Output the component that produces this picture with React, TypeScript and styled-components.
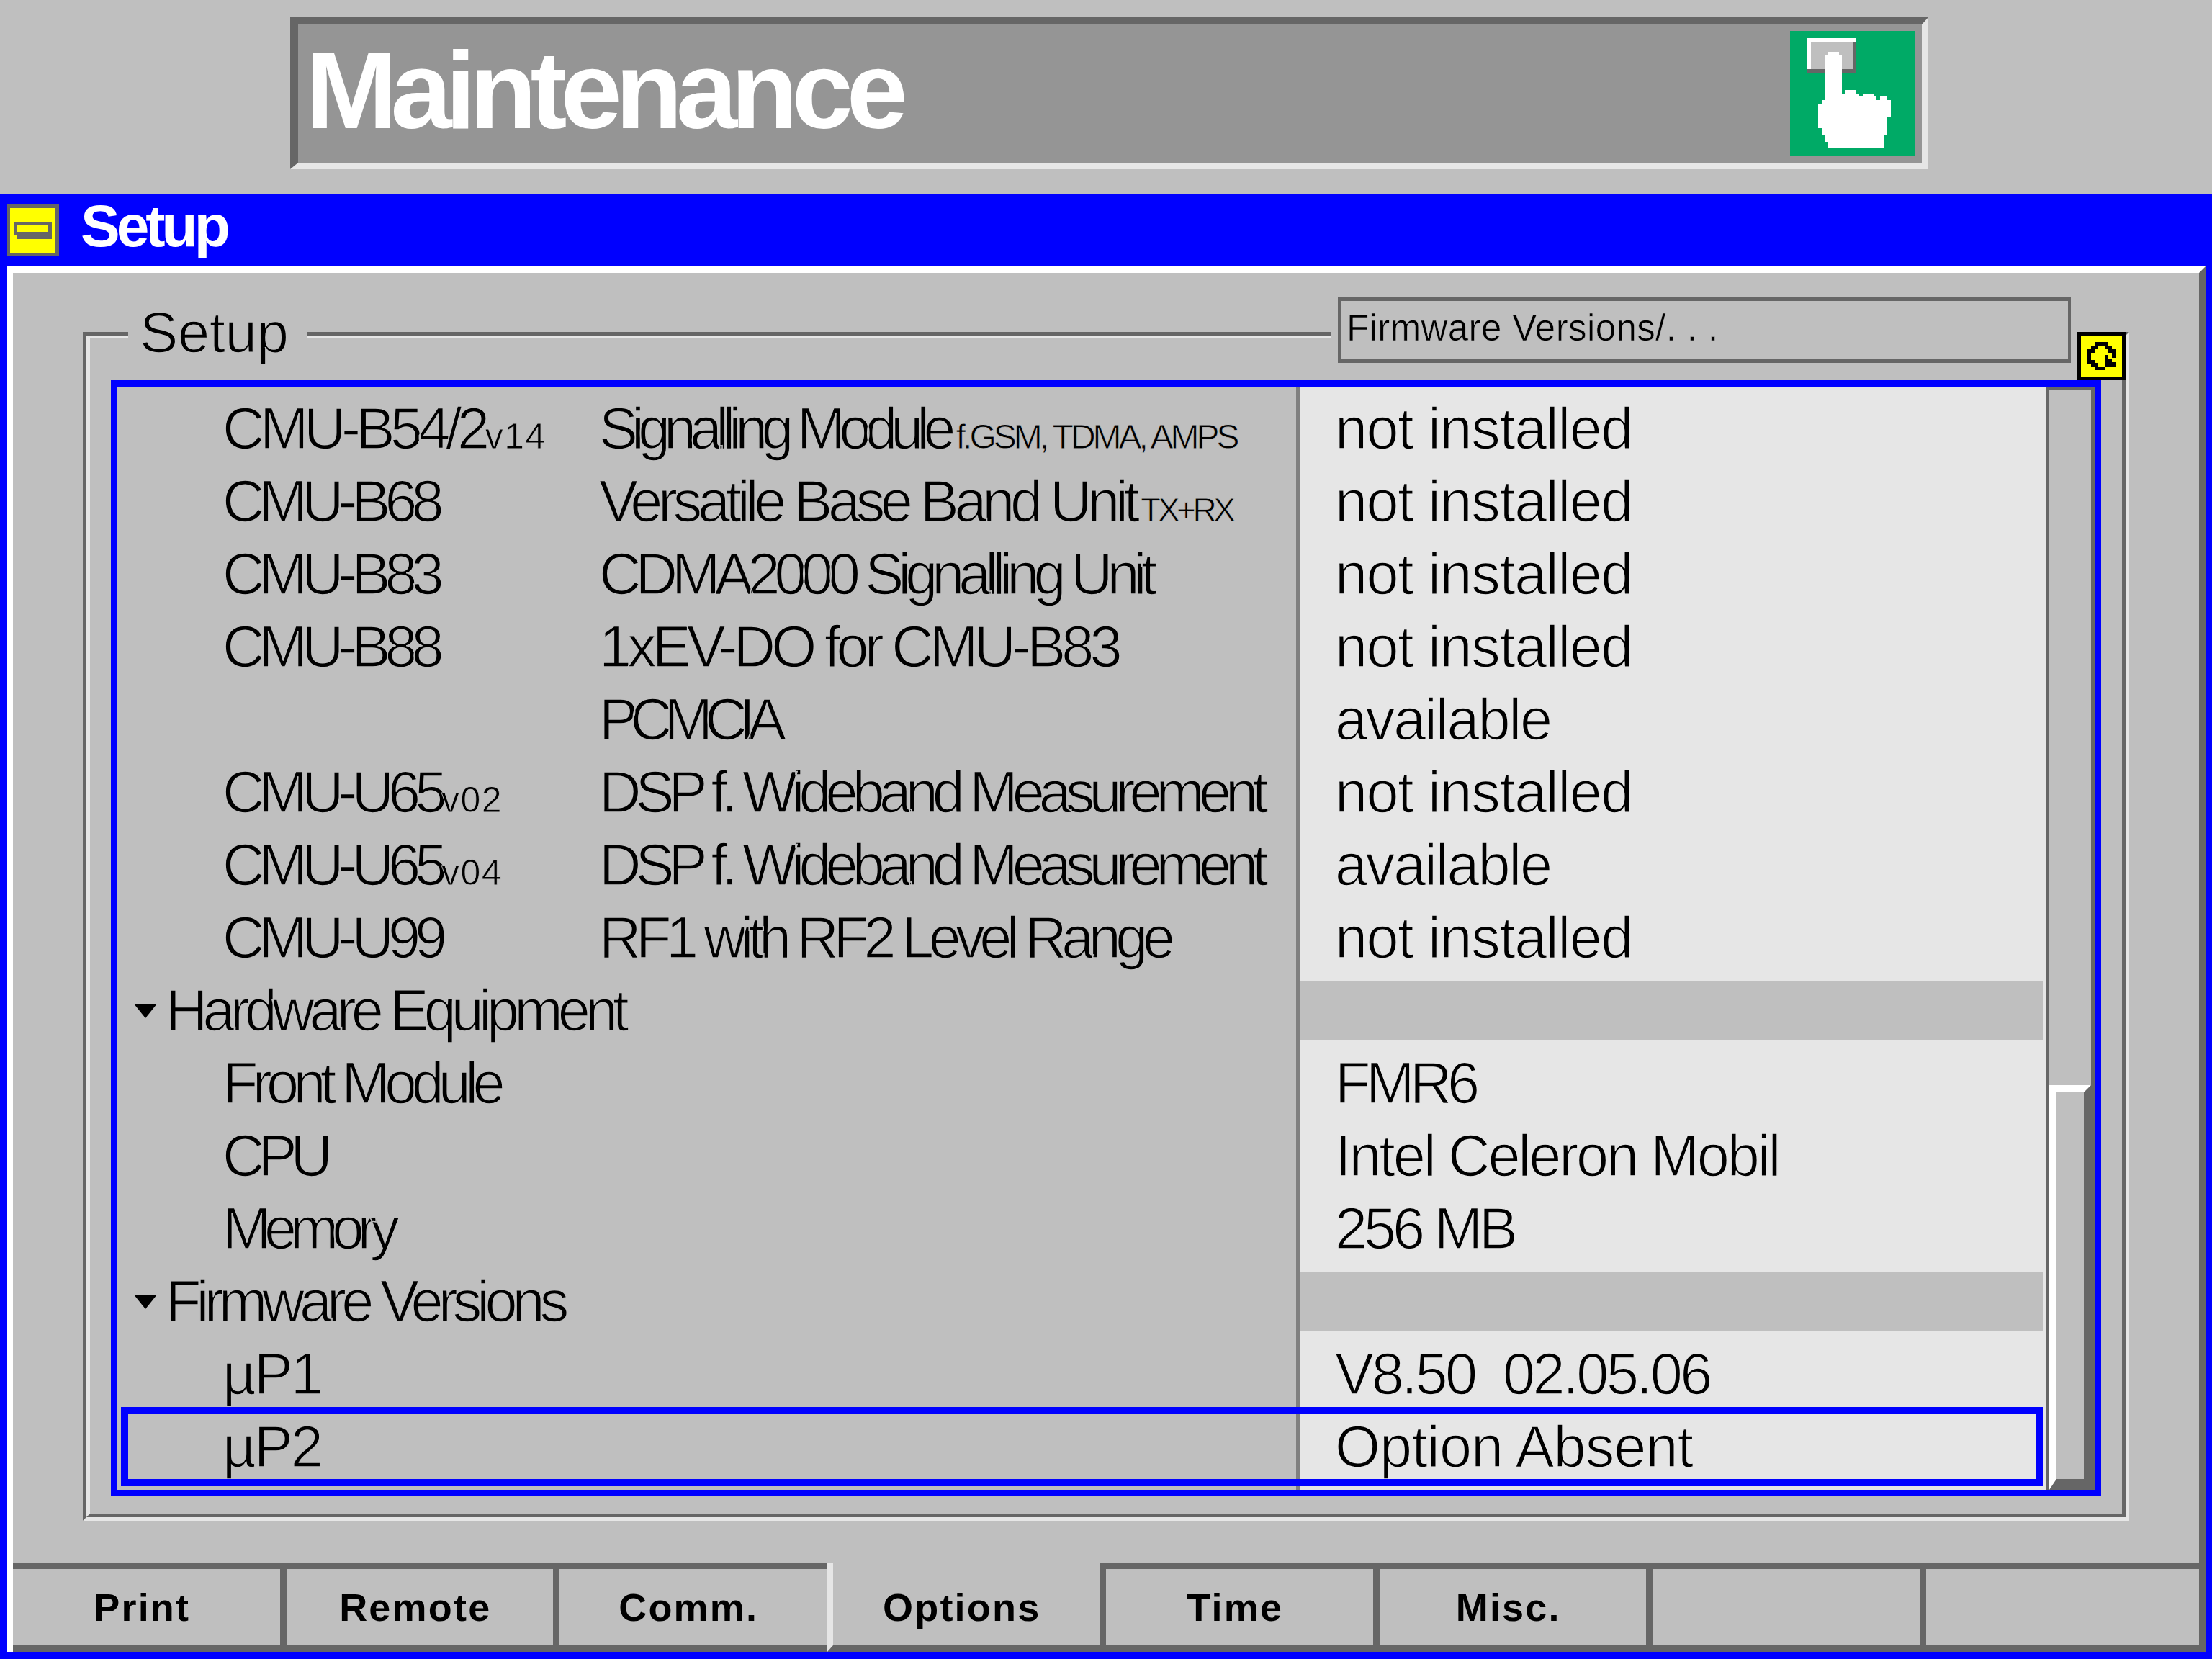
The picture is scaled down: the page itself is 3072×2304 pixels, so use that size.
import type { FC } from 'react';
import styled, { createGlobalStyle } from 'styled-components';

const GlobalStyle = createGlobalStyle`
  html, body {
    margin: 0;
    padding: 0;
    background: #bfbfbf;
  }
  * {
    box-sizing: border-box;
  }
`;

const Page = styled.div`
  width: 3072px;
  height: 2304px;
  display: flex;
  flex-direction: column;
  overflow: hidden;
  background: #bfbfbf;
  color: #000;
  font-family: 'Liberation Sans', Arial, sans-serif;
`;

const Header = styled.header`
  height: 269px;
  padding: 24px 394px 0 403px;
`;

const TitlePanel = styled.div`
  height: 211px;
  display: flex;
  justify-content: space-between;
  padding: 9px 10px 0 10px;
  border-style: solid;
  border-width: 10px 9px 9px 11px;
  border-color: #666 #e6e6e6 #e6e6e6 #666;
  background: #959595;
`;

const TitleText = styled.h1`
  margin: 0;
  color: #fff;
  font-size: 153px;
  line-height: 164px;
  font-weight: 700;
  letter-spacing: -9px;
`;

const Window = styled.main`
  flex: 1;
  display: flex;
  flex-direction: column;
  min-height: 0;
`;

const TitleBar = styled.div`
  height: 101px;
  display: flex;
  align-items: center;
  gap: 30px;
  padding-left: 10px;
  background: #0000ff;
`;

const TitleBarLabel = styled.span`
  padding-bottom: 12px;
  color: #fff;
  font-size: 82px;
  font-weight: 700;
  letter-spacing: -5px;
`;

const WindowBody = styled.div`
  flex: 1;
  min-height: 0;
  display: flex;
  border-style: solid;
  border-width: 0 9px 10px 10px;
  border-color: #0000ff;
`;

const WindowInner = styled.div`
  flex: 1;
  min-width: 0;
  display: flex;
  flex-direction: column;
  border-style: solid;
  border-width: 9px 9px 0 8px;
  border-color: #fff #666 #666 #fff;
`;

const Content = styled.div`
  flex: 1;
  min-height: 0;
  padding: 82px 97px 58px 97px;
`;

const FrameOuter = styled.section`
  position: relative;
  height: 1651px;
  border-style: solid;
  border-width: 5px;
  border-color: #666 #e6e6e6 #e6e6e6 #666;
`;

const FrameInner = styled.div`
  height: 100%;
  padding: 58px 29px 24px 29px;
  border-style: solid;
  border-width: 4px 5px 5px 5px;
  border-color: #e6e6e6 #666 #666 #e6e6e6;
`;

const Legend = styled.div`
  position: absolute;
  left: 58px;
  top: -55px;
  width: 249px;
  padding-left: 16px;
  background: #bfbfbf;
  font-size: 80px;
  line-height: 101px;
  letter-spacing: -0.5px;
  -webkit-text-stroke: 1.5px #bfbfbf;
`;

const FieldWrap = styled.div`
  position: absolute;
  left: 1728px;
  top: -53px;
  padding: 0 9px 0 10px;
  background: #bfbfbf;
`;

const FieldBox = styled.div`
  width: 1018px;
  height: 91px;
  padding: 0 0 6px 8px;
  display: flex;
  align-items: center;
  border-style: solid;
  border-width: 5px 4px;
  border-color: #666;
  font-size: 51px;
  letter-spacing: 0.4px;
  -webkit-text-stroke: 0.6px #bfbfbf;
`;

const RefreshButton = styled.div`
  position: absolute;
  left: 2765px;
  top: -5px;
  width: 67px;
  height: 67px;
  border: 5px solid #000;
  background: #ffff00;
  svg {
    display: block;
  }
`;

const ListBox = styled.div`
  height: 100%;
  display: flex;
  border-style: solid;
  border-width: 10px 9px 9px 8px;
  border-color: #0000ff;
`;

const Table = styled.div`
  flex: 1;
  min-width: 0;
  padding-top: 7px;
  background: linear-gradient(
    90deg,
    #bfbfbf 1638px,
    #808080 1638px,
    #808080 1643px,
    #e6e6e6 1643px
  );
`;

const Row = styled.div`
  position: relative;
  height: 101px;
  display: grid;
  grid-template-columns: 1643px 1fr;
  font-size: 81px;
  line-height: 101px;
`;

const RowLabel = styled.div`
  display: grid;
  grid-template-columns: 523px 1fr;
  padding-left: 147px;
  white-space: nowrap;
  -webkit-text-stroke: 1.5px #bfbfbf;
`;

const GroupLabel = styled.div`
  display: flex;
  align-items: center;
  gap: 12px;
  padding-left: 24px;
  letter-spacing: -6.9px;
  white-space: nowrap;
  -webkit-text-stroke: 1.5px #bfbfbf;
`;

const Caret = styled.i`
  width: 0;
  height: 0;
  border-style: solid;
  border-width: 20px 16px 0 16px;
  border-color: #000 transparent transparent transparent;
`;

const Spaced = styled.span<{ $spacing?: number }>`
  letter-spacing: ${(p) => p.$spacing ?? -8}px;
`;

const Note = styled.small<{ $size: number; $spacing: number }>`
  font-size: ${(p) => p.$size}px;
  letter-spacing: ${(p) => p.$spacing}px;
  -webkit-text-stroke: 0.8px #bfbfbf;
`;

const RowValue = styled.div<{ $spacing?: number }>`
  padding-left: 49px;
  letter-spacing: ${(p) => p.$spacing ?? -1.5}px;
  white-space: pre;
  -webkit-text-stroke: 1.5px #e6e6e6;
`;

const GroupBand = styled.div`
  height: 82px;
  margin: 9px 5px 0 0;
  background: #bfbfbf;
`;

const SelectedFrame = styled.div`
  position: absolute;
  left: 6px;
  top: -5px;
  width: 2669px;
  height: 110px;
  border: 10px solid #0000ff;
  pointer-events: none;
`;

const ScrollTrack = styled.div`
  width: 67px;
  flex: none;
  display: flex;
  flex-direction: column;
  justify-content: flex-end;
  border-style: solid;
  border-width: 3px 5px 0 4px;
  border-color: #666;
`;

const ScrollThumb = styled.div`
  height: 562px;
  border-style: solid;
  border-width: 10px 10px 15px 10px;
  border-color: #fff #666 #666 #fff;
  background: #bfbfbf;
`;

const TabBar = styled.nav`
  height: 124px;
  display: flex;
  flex: none;
`;

const Tab = styled.div<{ $active?: boolean; $last?: boolean }>`
  position: relative;
  flex: none;
  width: ${(p) => (p.$active ? 387.5 : 379.5)}px;
  margin-left: ${(p) => (p.$active ? -8 : 0)}px;
  display: flex;
  align-items: center;
  justify-content: center;
  padding-top: ${(p) => (p.$active ? 9 : 0)}px;
  padding-right: 12px;
  background: #bfbfbf;
  border-style: solid;
  border-width: ${(p) => (p.$active ? '0' : '9px')} ${(p) => (p.$last ? '0' : '9px')} 9px ${(p) => (p.$active ? '8px' : '0')};
  border-color: #666 #666 #666 #e6e6e6;
  font-size: 54px;
  font-weight: 700;
  letter-spacing: 2.2px;
`;

type Item = {
  code?: string;
  codeSpacing?: number;
  codeNote?: string;
  name?: string;
  nameSpacing?: number;
  nameNote?: string;
  noteSize?: number;
  noteSpacing?: number;
  value?: string;
  valueSpacing?: number;
  group?: string;
  selected?: boolean;
};

const rows: Item[] = [
  { code: 'CMU-B54/2', codeSpacing: -6.5, codeNote: 'v14', name: 'Signalling Module', nameSpacing: -9, nameNote: ' f.GSM, TDMA, AMPS', noteSize: 48, noteSpacing: -4, value: 'not installed' },
  { code: 'CMU-B68', name: 'Versatile Base Band Unit', nameSpacing: -6.3, nameNote: ' TX+RX', noteSize: 46, noteSpacing: -4.5, value: 'not installed' },
  { code: 'CMU-B83', name: 'CDMA2000 Signalling Unit', value: 'not installed' },
  { code: 'CMU-B88', name: '1xEV-DO for CMU-B83', nameSpacing: -5.9, value: 'not installed' },
  { name: 'PCMCIA', nameSpacing: -11, value: 'available', valueSpacing: -2.2 },
  { code: 'CMU-U65', codeNote: 'v02', name: 'DSP f. Wideband Measurement', value: 'not installed' },
  { code: 'CMU-U65', codeNote: 'v04', name: 'DSP f. Wideband Measurement', value: 'available', valueSpacing: -2.2 },
  { code: 'CMU-U99', name: 'RF1 with RF2 Level Range', nameSpacing: -7.5, value: 'not installed' },
  { group: 'Hardware Equipment' },
  { code: 'Front Module', codeSpacing: -7.7, value: 'FMR6', valueSpacing: -6.5 },
  { code: 'CPU', codeSpacing: -9, value: 'Intel Celeron Mobil', valueSpacing: -3.1 },
  { code: 'Memory', codeSpacing: -9.4, value: '256 MB', valueSpacing: -5 },
  { group: 'Firmware Versions' },
  { code: 'µP1', codeSpacing: -3, value: 'V8.50  02.05.06', valueSpacing: -3.4 },
  { code: 'µP2', codeSpacing: -3, value: 'Option Absent', valueSpacing: -0.9, selected: true },
];

const tabs = ['Print', 'Remote', 'Comm.', 'Options', 'Time', 'Misc.', '', ''];

const HandIcon: FC = () => (
  <svg width="173" height="173" viewBox="138 69 519 519" shapeRendering="crispEdges">
    <rect x="138" y="69" width="519" height="519" fill="#00aa66" />
    <rect x="210" y="99" width="204" height="144" fill="#666" />
    <path d="M210 99H414V114H225V228H210Z" fill="#fff" />
    <rect x="225" y="114" width="174" height="114" fill="#bfbfbf" />
    <path
      fill="#fff"
      d="M297 156H342V171H354V330H369V315H414V330H426V343H441V330H486V343H498V357H513V343H543V357H558V429H543V501H528V558H297V530H282V501H270V474H255V372H270V357H282V171H297Z"
    />
  </svg>
);

const WindowIcon: FC = () => (
  <svg width="72" height="72" viewBox="0 0 72 72" shapeRendering="crispEdges">
    <rect width="72" height="72" fill="#666" />
    <rect x="4" y="5" width="63" height="62" fill="#ffff00" />
    <path d="M9 24H62V48H14V43H9Z" fill="#666" />
    <rect x="14" y="29" width="43" height="9" fill="#ffff00" />
  </svg>
);

const RefreshIcon: FC = () => (
  <svg width="57" height="57" viewBox="90 78 171 171" shapeRendering="crispEdges">
    <path
      d="M190 214H154V200H139V187H124V142H139V127H154V112H197V127H212V142H227V170"
      fill="none"
      stroke="#000"
      strokeWidth="15"
    />
    <path d="M190 160H205V175H219V190H234V207H190Z" fill="#000" />
  </svg>
);

const App: FC = () => (
  <Page>
    <GlobalStyle />
    <Header>
      <TitlePanel>
        <TitleText>Maintenance</TitleText>
        <HandIcon />
      </TitlePanel>
    </Header>
    <Window>
      <TitleBar>
        <WindowIcon />
        <TitleBarLabel>Setup</TitleBarLabel>
      </TitleBar>
      <WindowBody>
        <WindowInner>
          <Content>
            <FrameOuter>
              <Legend>Setup</Legend>
              <FieldWrap>
                <FieldBox>Firmware Versions/. . .</FieldBox>
              </FieldWrap>
              <RefreshButton>
                <RefreshIcon />
              </RefreshButton>
              <FrameInner>
                <ListBox>
                  <Table>
                    {rows.map((row, i) => (
                      <Row key={i}>
                        {row.group ? (
                          <GroupLabel>
                            <Caret />
                            {row.group}
                          </GroupLabel>
                        ) : (
                          <RowLabel>
                            <span>
                              <Spaced $spacing={row.codeSpacing}>{row.code}</Spaced>
                              {row.codeNote && (
                                <Note $size={50} $spacing={1.5}>
                                  {row.codeNote}
                                </Note>
                              )}
                            </span>
                            <span>
                              <Spaced $spacing={row.nameSpacing}>{row.name}</Spaced>
                              {row.nameNote && (
                                <Note $size={row.noteSize ?? 46} $spacing={row.noteSpacing ?? -6}>
                                  {row.nameNote}
                                </Note>
                              )}
                            </span>
                          </RowLabel>
                        )}
                        {row.group ? (
                          <GroupBand />
                        ) : (
                          <RowValue $spacing={row.valueSpacing}>{row.value}</RowValue>
                        )}
                        {row.selected && <SelectedFrame />}
                      </Row>
                    ))}
                  </Table>
                  <ScrollTrack>
                    <ScrollThumb />
                  </ScrollTrack>
                </ListBox>
              </FrameInner>
            </FrameOuter>
          </Content>
          <TabBar>
            {tabs.map((tab, i) => (
              <Tab key={i} $active={tab === 'Options'} $last={i === tabs.length - 1}>
                {tab}
              </Tab>
            ))}
          </TabBar>
        </WindowInner>
      </WindowBody>
    </Window>
  </Page>
);

export default App;
